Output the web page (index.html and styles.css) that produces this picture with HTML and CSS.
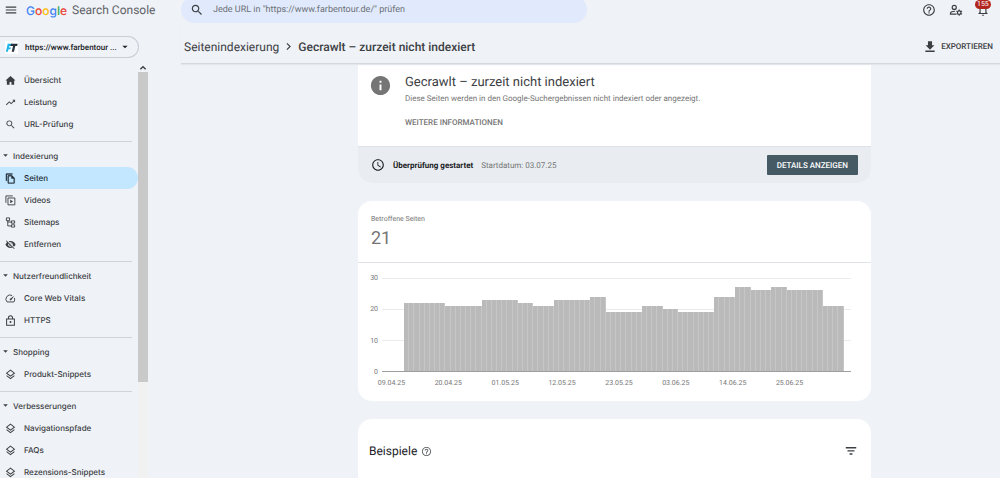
FILE: index.html
```html
<!DOCTYPE html>
<html lang="de">
<head>
  <meta charset="UTF-8">
  <title>Seitenindexierung</title>
  <link rel="stylesheet" href="styles.css">
</head>
<body>
  <svg class="sprite" aria-hidden="true">
    <symbol id="i-menu" viewBox="0 0 24 24"><path d="M3 18h18v-2H3v2zm0-5h18v-2H3v2zm0-7v2h18V6H3z"/></symbol>
    <symbol id="i-home" viewBox="0 0 24 24"><path d="M10 21v-6h4v6h6v-9h3L12 2 1 12h3v9z"/></symbol>
    <symbol id="i-trend" viewBox="0 0 24 24"><path d="M16 6l2.29 2.29-4.88 4.88-4-4L2 16.59 3.41 18l6-6 4 4 6.3-6.29L22 12V6z"/></symbol>
    <symbol id="i-search" viewBox="0 0 24 24"><path d="M15.5 14h-.79l-.28-.27C15.41 12.59 16 11.11 16 9.5 16 5.91 13.09 3 9.5 3S3 5.91 3 9.5 5.91 16 9.5 16c1.61 0 3.09-.59 4.23-1.57l.27.28v.79l5 4.99L20.49 19l-4.99-5zm-6 0C7.01 14 5 11.99 5 9.5S7.01 5 9.5 5 14 7.01 14 9.5 11.99 14 9.5 14z"/></symbol>
    <symbol id="i-pages" viewBox="0 0 24 24"><path d="M16 1H4c-1.1 0-2 .9-2 2v14h2V3h12V1zm-1 4H8c-1.1 0-2 .9-2 2v14c0 1.1.9 2 2 2h11c1.1 0 2-.9 2-2V11l-6-6zM8 21V7h6v5h5v9H8z" stroke="currentColor" stroke-width=".6"/></symbol>
    <symbol id="i-video" viewBox="0 0 24 24"><path d="M2 17V2h15M6.500 6.500h15v15h-15z" fill="none" stroke="currentColor" stroke-width="2"/><path d="M11.500 10v8l6-4z"/></symbol>
    <symbol id="i-tree" viewBox="0 0 24 24"><path d="M3 2h7v6H3zM14 8.500h7v5h-7zM14 17h7v5h-7zM6 8v11.500h8M6 11h8" fill="none" stroke="currentColor" stroke-width="2"/></symbol>
    <symbol id="i-hidden" viewBox="0 0 24 24"><path d="M12 7c2.760 0 5 2.240 5 5 0 .65-.13 1.260-.36 1.830l2.920 2.920c1.510-1.260 2.700-2.890 3.430-4.750-1.730-4.390-6-7.500-11-7.500-1.400 0-2.740.25-3.980.7l2.160 2.160C10.740 7.130 11.350 7 12 7zM2 4.270l2.280 2.280.46.46C3.080 8.300 1.780 10.020 1 12c1.730 4.390 6 7.500 11 7.500 1.550 0 3.030-.3 4.380-.84l.42.42L19.730 22 21 20.730 3.270 3 2 4.270zM7.530 9.800l1.550 1.550c-.05.21-.08.43-.08.65 0 1.660 1.340 3 3 3 .22 0 .44-.03.65-.08l1.550 1.550c-.67.33-1.410.53-2.200.53-2.760 0-5-2.240-5-5 0-.79.2-1.530.53-2.200zm4.310-.78l3.150 3.150.02-.16c0-1.660-1.340-3-3-3l-.17.01z"/></symbol>
    <symbol id="i-speed" viewBox="0 0 24 24"><path d="M15.500 5.500A9 9 0 0 0 4.500 19.500h15a9 9 0 0 0 .8-9" fill="none" stroke="currentColor" stroke-width="2"/><path d="M20 6l-9 6.500a2 2 0 1 0 2.800 2.800z"/></symbol>
    <symbol id="i-lock" viewBox="0 0 24 24"><path d="M3.500 8.500h17v14h-17zM7.500 8.500V6a4.500 4.500 0 0 1 9 0v2.500" fill="none" stroke="currentColor" stroke-width="2.200"/><circle cx="12" cy="15.500" r="2.200"/></symbol>
    <symbol id="i-layers" viewBox="0 0 24 24"><path d="M12 2.500l8.500 6.500-8.500 6.500-8.500-6.500zM3.500 14.500l8.500 6.500 8.500-6.500" fill="none" stroke="currentColor" stroke-width="2.200"/></symbol>
    <symbol id="i-help" viewBox="0 0 24 24"><path d="M11 18h2v-2h-2v2zm1-16C6.480 2 2 6.480 2 12s4.480 10 10 10 10-4.480 10-10S17.520 2 12 2zm0 18c-4.410 0-8-3.590-8-8s3.590-8 8-8 8 3.590 8 8-3.590 8-8 8zm0-14c-2.210 0-4 1.790-4 4h2c0-1.100.9-2 2-2s2 .9 2 2c0 2-3 1.750-3 5h2c0-2.250 3-2.500 3-5 0-2.210-1.790-4-4-4z"/></symbol>
    <symbol id="i-user" viewBox="0 0 24 24"><g fill="none" stroke="currentColor" stroke-width="2"><circle cx="9" cy="7.500" r="3.500"/><path d="M12 19H2.500v-1.500c0-2 4-3.500 8-3.300"/><circle cx="17.500" cy="16.500" r="3"/></g><path d="M17.500 11v2.500M17.500 19.500V22M12.700 13.700l2.200 1.300M20.100 18l2.200 1.300M12.700 19.300l2.200-1.300M20.100 15l2.200-1.300" stroke="currentColor" stroke-width="2"/></symbol>
    <symbol id="i-bell" viewBox="0 0 24 24"><path d="M12 22c1.100 0 2-.9 2-2h-4c0 1.100.9 2 2 2zm6-6v-5c0-3.070-1.630-5.640-4.500-6.320V4c0-.83-.67-1.500-1.500-1.500s-1.500.67-1.500 1.500v.68C7.640 5.360 6 7.920 6 11v5l-2 2v1h16v-1l-2-2zm-2 1H8v-6c0-2.480 1.510-4.500 4-4.500s4 2.020 4 4.500v6z"/></symbol>
    <symbol id="i-download" viewBox="0 0 24 24"><path d="M19.500 9h-4V2h-7v7h-4l7.500 7.500zM4 18v2.500h16V18z"/></symbol>
    <symbol id="i-info" viewBox="0 0 24 24"><path d="M12 2C6.480 2 2 6.480 2 12s4.480 10 10 10 10-4.480 10-10S17.520 2 12 2zm1 15h-2v-6h2v6zm0-8h-2V7h2v2z"/></symbol>
    <symbol id="i-clock" viewBox="0 0 24 24"><path d="M12 2C6.480 2 2 6.480 2 12s4.480 10 10 10 10-4.480 10-10S17.520 2 12 2zm0 18c-4.420 0-8-3.580-8-8s3.580-8 8-8 8 3.580 8 8-3.580 8-8 8zm.5-13H11v6l5.200 3.200.8-1.300-4.500-2.700z"/></symbol>
    <symbol id="i-filter" viewBox="0 0 24 24"><path d="M9.500 18.500h5V16h-5zM3 5v2.500h18V5zM6 13h12v-2.500H6z"/></symbol>
    <symbol id="i-caret" viewBox="0 0 24 24"><path d="M4 8l8 8 8-8z"/></symbol>
    <symbol id="i-chevron" viewBox="0 0 24 24"><path d="M8.500 5l7 7-7 7" fill="none" stroke="currentColor" stroke-width="2.500"/></symbol>
    <symbol id="i-up" viewBox="0 0 24 24"><path d="M4 16l8-8 8 8" fill="none" stroke="currentColor" stroke-width="4"/></symbol>
  </svg>

  <div class="app">
    <aside class="side">
      <div class="brand">
        <button class="icon-btn" aria-label="Menü"><svg class="icon icon-lg"><use href="#i-menu"/></svg></button>
        <a class="logo" href="#"><span class="google"><span class="b">G</span><span class="r">o</span><span class="y">o</span><span class="b">g</span><span class="g">l</span><span class="r">e</span></span> <span>Search Console</span></a>
      </div>
      <button class="property">
        <svg class="favicon" viewBox="0 0 12 12"><path d="M0 0h12v12H0z" fill="#fff"/><path d="M2.500 2.500H7L6.500 4.500H4L3.700 6h1.800L5 7.700H3.200L2.700 10H.8z" fill="#20b5e8"/><path d="M5.500 2.500H11.700L11.200 4.500H9.500L8.300 10H6.200l1.200-5.500H5z" fill="#26323c"/></svg>
        <span>https://www.farbentour ...</span>
        <svg class="icon icon-sm"><use href="#i-caret"/></svg>
      </button>
      <div class="nav-wrap">
        <nav class="nav">
          <div class="group">
            <a class="item" href="#"><svg class="icon"><use href="#i-home"/></svg>Übersicht</a>
            <a class="item" href="#"><svg class="icon"><use href="#i-trend"/></svg>Leistung</a>
            <a class="item" href="#"><svg class="icon"><use href="#i-search"/></svg>URL-Prüfung</a>
          </div>
          <div class="group">
            <button class="group-title"><svg class="icon icon-xs"><use href="#i-caret"/></svg>Indexierung</button>
            <a class="item active" href="#"><svg class="icon"><use href="#i-pages"/></svg>Seiten</a>
            <a class="item" href="#"><svg class="icon"><use href="#i-video"/></svg>Videos</a>
            <a class="item" href="#"><svg class="icon"><use href="#i-tree"/></svg>Sitemaps</a>
            <a class="item" href="#"><svg class="icon"><use href="#i-hidden"/></svg>Entfernen</a>
          </div>
          <div class="group">
            <button class="group-title"><svg class="icon icon-xs"><use href="#i-caret"/></svg>Nutzerfreundlichkeit</button>
            <a class="item" href="#"><svg class="icon"><use href="#i-speed"/></svg>Core Web Vitals</a>
            <a class="item" href="#"><svg class="icon"><use href="#i-lock"/></svg>HTTPS</a>
          </div>
          <div class="group">
            <button class="group-title"><svg class="icon icon-xs"><use href="#i-caret"/></svg>Shopping</button>
            <a class="item" href="#"><svg class="icon"><use href="#i-layers"/></svg>Produkt-Snippets</a>
          </div>
          <div class="group">
            <button class="group-title"><svg class="icon icon-xs"><use href="#i-caret"/></svg>Verbesserungen</button>
            <a class="item" href="#"><svg class="icon"><use href="#i-layers"/></svg>Navigationspfade</a>
            <a class="item" href="#"><svg class="icon"><use href="#i-layers"/></svg>FAQs</a>
            <a class="item" href="#"><svg class="icon"><use href="#i-layers"/></svg>Rezensions-Snippets</a>
          </div>
        </nav>
        <div class="scrollbar">
          <svg class="icon icon-sm"><use href="#i-up"/></svg>
          <div class="thumb"></div>
        </div>
      </div>
    </aside>

    <div class="main">
      <header class="topbar">
        <label class="search">
          <svg class="icon icon-lg"><use href="#i-search"/></svg>
          <input type="text" aria-label="URL prüfen" placeholder='Jede URL in "https://www.farbentour.de/" prüfen'>
        </label>
        <div class="tools">
          <button class="icon-btn" aria-label="Hilfe"><svg class="icon icon-lg"><use href="#i-help"/></svg></button>
          <button class="icon-btn" aria-label="Nutzer"><svg class="icon icon-lg"><use href="#i-user"/></svg></button>
          <button class="icon-btn bell" aria-label="Benachrichtigungen"><svg class="icon icon-lg"><use href="#i-bell"/></svg><span class="badge">155</span></button>
        </div>
      </header>

      <div class="crumbs">
        <a href="#">Seitenindexierung</a>
        <svg class="icon"><use href="#i-chevron"/></svg>
        <strong>Gecrawlt – zurzeit nicht indexiert</strong>
        <button class="export"><svg class="icon icon-lg"><use href="#i-download"/></svg>EXPORTIEREN</button>
      </div>

      <main class="content">
        <section class="card status">
          <div class="status-info">
            <svg class="icon icon-xl"><use href="#i-info"/></svg>
            <div>
              <h1>Gecrawlt – zurzeit nicht indexiert</h1>
              <p>Diese Seiten werden in den Google-Suchergebnissen nicht indexiert oder angezeigt.</p>
              <a class="more" href="#">WEITERE INFORMATIONEN</a>
            </div>
          </div>
          <div class="status-bar">
            <svg class="icon icon-lg"><use href="#i-clock"/></svg>
            <strong>Überprüfung gestartet</strong>
            <span>Startdatum: 03.07.25</span>
            <button class="details">DETAILS ANZEIGEN</button>
          </div>
        </section>

        <section class="card">
          <div class="metric">
            <div class="metric-label">Betroffene Seiten</div>
            <div class="metric-value">21</div>
          </div>
          <div class="chart">
            <div class="y-axis"><span>30</span><span>20</span><span>10</span><span>0</span></div>
            <div class="plot">
              <div class="bars" id="bars"></div>
            </div>
          </div>
          <div class="x-axis">
            <span>09.04.25</span><span>20.04.25</span><span>01.05.25</span><span>12.05.25</span><span>23.05.25</span><span>03.06.25</span><span>14.06.25</span><span>25.06.25</span>
          </div>
        </section>

        <section class="card examples">
          <h2>Beispiele</h2>
          <svg class="icon"><use href="#i-help"/></svg>
          <button class="icon-btn filter" aria-label="Filter"><svg class="icon icon-lg"><use href="#i-filter"/></svg></button>
        </section>
      </main>
    </div>
  </div>

  <script src="script.js"></script>
</body>
</html>
```
FILE: styles.css
```css
* {
  box-sizing: border-box;
}

body {
  margin: 0;
  background: #eff2f7;
  color: #3c4043;
  font-family: Roboto, "Liberation Sans", sans-serif;
  font-size: 8px;
  text-rendering: geometricPrecision;
}

button {
  padding: 0;
  border: none;
  background: none;
  color: inherit;
  font: inherit;
  text-rendering: inherit;
  cursor: pointer;
}

a {
  color: inherit;
  text-decoration: none;
}

h1, h2, p {
  margin: 0;
  font-weight: 400;
}

.sprite {
  display: none;
}

.icon {
  width: 11px;
  height: 11px;
  flex: none;
  fill: currentColor;
}

.icon-xs { width: 7px; height: 7px; }
.icon-sm { width: 8px; height: 8px; }
.icon-lg { width: 14px; height: 14px; }
.icon-xl { width: 23px; height: 23px; }

.icon-btn {
  display: flex;
}

.app {
  display: flex;
  height: 100vh;
  overflow: hidden;
}

/* sidebar */

.side {
  width: 181px;
  flex: none;
  display: flex;
  flex-direction: column;
}

.brand {
  display: flex;
  align-items: center;
  gap: 8px;
  height: 20px;
  padding-left: 4px;
  margin-bottom: 16px;
}

.logo {
  display: flex;
  align-items: center;
  gap: 5px;
  color: #5f6368;
  font-size: 12px;
  white-space: nowrap;
}

.google {
  font-family: Inter, Roboto, sans-serif;
  font-weight: 500;
}

.b { color: #4285f4; }
.r { color: #ea4335; }
.y { color: #fbbc05; }
.g { color: #34a853; }

.property {
  display: flex;
  align-items: center;
  gap: 4px;
  width: 139px;
  height: 22px;
  padding-left: 5px;
  border: 1px solid #c9ced6;
  border-left: none;
  border-radius: 0 11px 11px 0;
  color: #202124;
  font-weight: 500;
  white-space: nowrap;
}

.favicon {
  width: 13px;
  height: 13px;
  margin-right: 3px;
}

.nav-wrap {
  flex: 1;
  min-height: 0;
  display: flex;
  margin-top: 6px;
}

.nav {
  width: 138px;
  padding-top: 5px;
  overflow: hidden;
  font-family: Inter, Roboto, sans-serif;
  font-weight: 500;
}

.group {
  padding-bottom: 6px;
  margin-bottom: 3px;
}

.group::after {
  content: "";
  display: block;
  width: 132px;
  height: 1px;
  margin: 6px 0 -7px;
  background: #d0d4d9;
}

.group-title {
  display: flex;
  align-items: center;
  gap: 4px;
  height: 23px;
  padding-left: 2px;
}

.item {
  display: flex;
  align-items: center;
  gap: 8px;
  height: 22px;
  padding-left: 5px;
}

.active {
  border-radius: 0 11px 11px 0;
  background: #c2e7ff;
  color: #1f2a33;
}

.scrollbar {
  width: 10px;
  display: flex;
  flex-direction: column;
  align-items: center;
  background: #f1f1f1;
}

.scrollbar .icon {
  width: 10px;
  padding: 0 1px;
  background: #eff2f7;
}

.thumb {
  width: 10px;
  height: 310px;
  background: #c9c9c9;
}

/* top */

.main {
  flex: 1;
  min-width: 0;
  display: flex;
  flex-direction: column;
}

.topbar {
  display: flex;
  align-items: center;
  justify-content: space-between;
  margin-top: -4px;
  padding-right: 10px;
}

.search {
  display: flex;
  align-items: center;
  gap: 9px;
  width: 406px;
  height: 27px;
  padding-left: 9px;
  border-radius: 14px;
  background: #e1eafc;
  font-size: 9px;
}

.search input {
  flex: 1;
  padding: 0;
  border: none;
  outline: none;
  background: none;
  color: #3c4043;
  font: inherit;
  text-rendering: inherit;
}

.search input::placeholder {
  color: #6b7075;
}

.tools {
  display: flex;
  gap: 13px;
}

.bell {
  position: relative;
}

.badge {
  position: absolute;
  top: -3px;
  left: -1px;
  padding: 0 2px;
  border-radius: 5px;
  background: #b3261e;
  color: #fff;
  font-size: 7px;
  line-height: 9px;
}

.crumbs {
  display: flex;
  flex: none;
  align-items: center;
  gap: 4px;
  height: 41px;
  padding: 7px 7px 0 3px;
  border-bottom: 1px solid #d5d9de;
  box-shadow: 0 1px 1px #e3e6eb;
  font-size: 12px;
  z-index: 1;
}

.crumbs strong {
  font-weight: 500;
}

.export {
  display: flex;
  align-items: center;
  gap: 4px;
  margin-left: auto;
  font-size: 8px;
  font-weight: 500;
}

/* cards */

.content {
  flex: 1;
  min-height: 0;
  padding: 0 129px 0 177px;
}

.card {
  margin-bottom: 18px;
  border-radius: 14px;
  background: #fff;
  overflow: hidden;
}

.status {
  border-radius: 0 0 14px 14px;
}

.status-info {
  display: flex;
  gap: 13px;
  height: 83px;
  padding: 10px 11px 0;
  border-bottom: 1px solid #dfe2e6;
  color: #757575;
}

.status-info h1 {
  color: #3c4043;
  font-size: 13px;
  line-height: 18px;
}

.status-info p {
  margin-bottom: 12px;
  line-height: 14px;
}

.more {
  font-weight: 500;
}

.status-bar {
  display: flex;
  align-items: center;
  gap: 8px;
  height: 36px;
  padding: 0 13px;
  background: #e9edf1;
  color: #757575;
}

.status-bar strong,
.status-bar .icon {
  color: #202124;
}

.details {
  height: 20px;
  margin-left: auto;
  padding: 0 10px;
  border-radius: 1px;
  background: #455a64;
  color: #fff;
  font-weight: 500;
}

.metric {
  height: 62px;
  padding: 13px;
  border-bottom: 1px solid #dfe2e6;
  color: #757575;
}

.metric-label {
  font-size: 7px;
  line-height: 10px;
}

.metric-value {
  font-size: 18px;
  line-height: 30px;
}

.chart {
  display: flex;
  gap: 4px;
  padding: 15px 20px 0 10px;
}

.y-axis {
  display: flex;
  flex-direction: column;
  justify-content: space-between;
  width: 10px;
  margin: -5px 0;
  color: #757575;
  font-size: 7px;
  line-height: 10px;
  text-align: right;
}

.plot {
  flex: 1;
  height: 94px;
  border-bottom: 1px solid #9e9e9e;
  background: repeating-linear-gradient(#ebebeb 0 1px, transparent 1px 31px);
}

.bars {
  display: flex;
  align-items: flex-end;
  height: 93px;
  padding: 0 7px 0 22px;
}

.bar {
  flex: 1;
  border-right: 1px solid #c6c6c6;
  background: #bababa;
}

.x-axis {
  display: flex;
  padding: 7px 53px 14px 5px;
  color: #757575;
  font-size: 7px;
  line-height: 8px;
  text-align: center;
}

.x-axis span {
  flex: 1;
}

.examples {
  display: flex;
  align-items: center;
  gap: 4px;
  height: 90px;
  padding: 0 13px 26px 11px;
  color: #5f6368;
}

.examples h2 {
  color: #202124;
  font-size: 12px;
}

.filter {
  margin-left: auto;
  color: #3c4043;
}
```
FILE: script.js
```js
// [affected pages, number of days]
const runs = [
  [22, 8], [21, 7], [23, 7], [22, 3], [21, 4], [23, 7], [24, 3], [19, 7], [21, 4],
  [20, 3], [19, 7], [24, 4], [27, 3], [26, 4], [27, 3], [26, 7], [21, 4]
];
const bars = document.getElementById("bars");

for (const [value, days] of runs) {
  for (let i = 0; i < days; i++) {
    const bar = document.createElement("div");
    bar.className = "bar";
    bar.style.height = (value / 30) * 100 + "%";
    bars.appendChild(bar);
  }
}
```
